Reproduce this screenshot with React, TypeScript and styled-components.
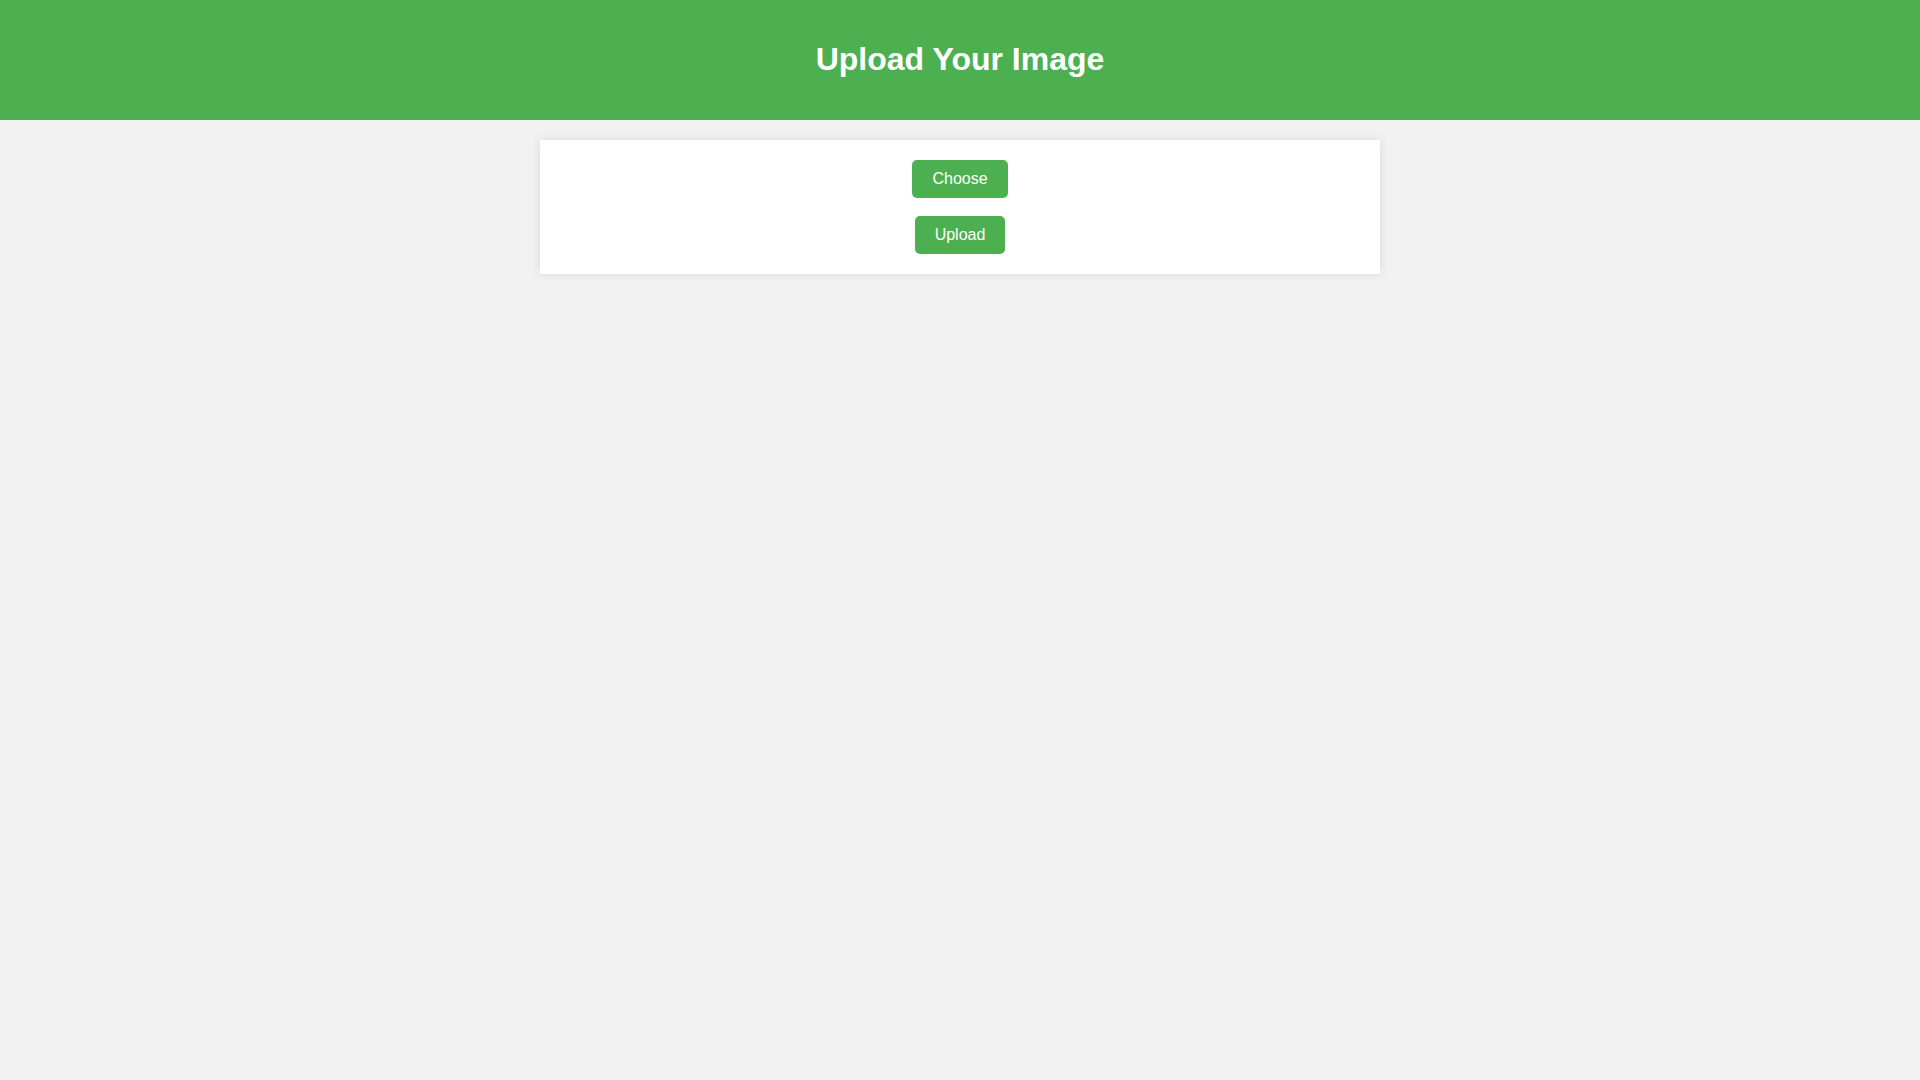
import React from "react";
import styled, { createGlobalStyle } from "styled-components";

const GlobalStyle = createGlobalStyle`
  html, body { margin: 0; padding: 0; }
  body {
    background: #f2f2f2;
    font-family: "Liberation Sans", Arial, sans-serif;
    min-height: 100vh;
  }
`;

const Header = styled.header`
  background: #4caf50;
  color: #ffffff;
  padding: 20px 20px 21px;
  text-align: center;
`;

const Title = styled.h1`
  margin: 21px 0;
  font-size: 32px;
  line-height: 37px;
  font-weight: bold;
`;

const Card = styled.main`
  width: 800px;
  margin: 20px auto;
  padding: 20px;
  background: #ffffff;
  box-shadow: 0 0 10px rgba(0, 0, 0, 0.1);
  display: flex;
  flex-direction: column;
  align-items: center;
  gap: 18px;
`;

const GreenButton = styled.button`
  background: #4caf50;
  color: #ffffff;
  border: none;
  border-radius: 5px;
  padding: 10px 20px;
  font-family: "Liberation Sans", Arial, sans-serif;
  font-size: 16px;
  line-height: 18px;
  cursor: pointer;
`;

export default function App() {
  return (
    <>
      <GlobalStyle />
      <Header>
        <Title>Upload Your Image</Title>
      </Header>
      <Card>
        <GreenButton type="button">Choose</GreenButton>
        <GreenButton type="button">Upload</GreenButton>
      </Card>
    </>
  );
}
